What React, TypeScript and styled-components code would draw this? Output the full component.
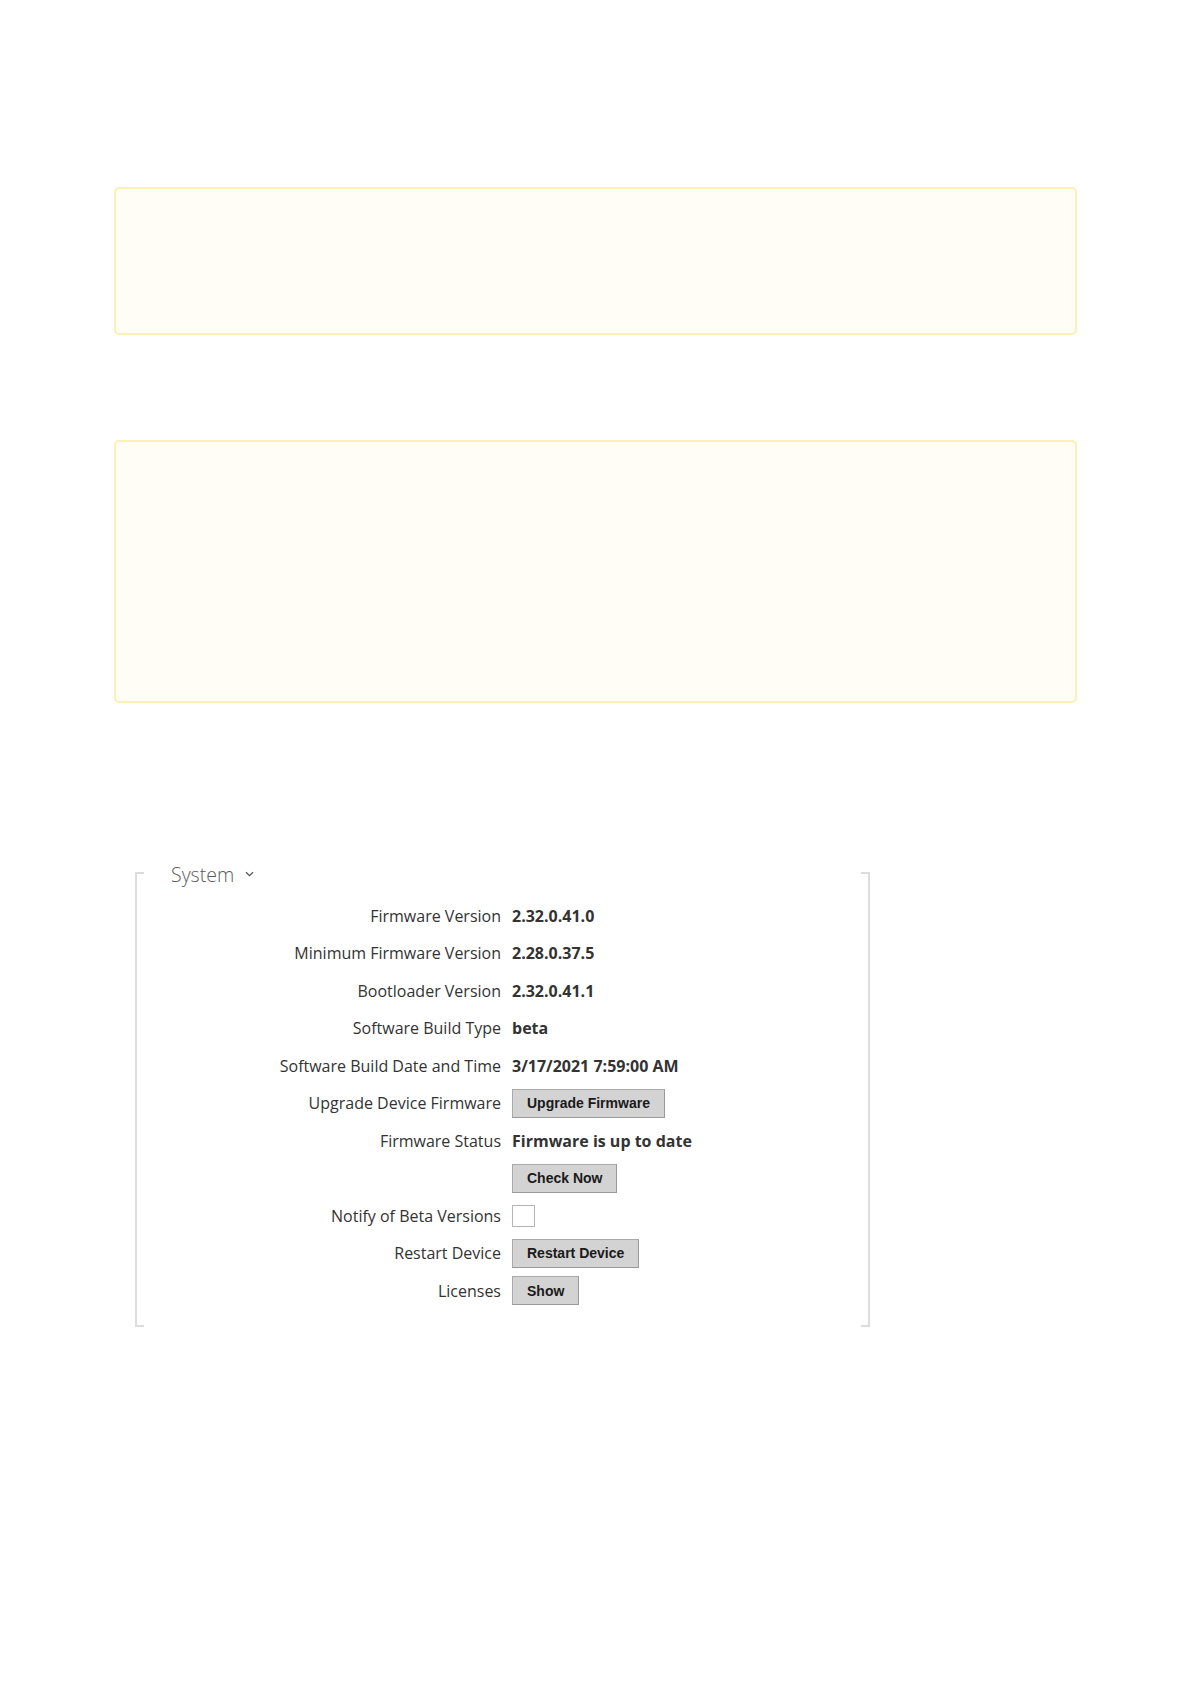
import styled, { createGlobalStyle } from 'styled-components';

const GlobalStyle = createGlobalStyle`
  html, body {
    margin: 0;
    padding: 0;
    background: #ffffff;
  }
  body {
    font-family: "Segoe UI", "Open Sans", "Noto Sans", sans-serif;
    color: #333333;
  }
`;

const Page = styled.div`
  width: 963px;
  padding: 187px 0 0 114px;
  display: flex;
  flex-direction: column;
`;

const NoteBox = styled.div<{ $height: number }>`
  box-sizing: border-box;
  height: ${({ $height }) => $height}px;
  background: #fffdf6;
  border: 2px solid #fcefb8;
  border-radius: 5px;
  & + & {
    margin-top: 105px;
  }
`;

const Section = styled.section`
  position: relative;
  box-sizing: border-box;
  width: 735px;
  margin: 162px 0 0 21px;
  padding: 0 0 17px 0;

  &::before,
  &::after {
    content: '';
    position: absolute;
    top: 7px;
    bottom: 0;
    width: 7px;
    border: 2px solid #dcdcdc;
  }
  &::before {
    left: 0;
    border-right: none;
  }
  &::after {
    right: 0;
    border-left: none;
  }
`;

const Heading = styled.h2`
  margin: -3px 0 11px 0;
  padding-left: 36px;
  display: flex;
  align-items: center;
  gap: 11px;
  height: 24px;
  font-size: 19.5px;
  font-weight: 300;
  color: #5a5a5a;
`;

const Chevron = () => (
  <svg width="9" height="6" viewBox="0 0 9 6" fill="none">
    <path d="M1 1.2 L4.5 4.6 L8 1.2" stroke="#555" strokeWidth="1.3" />
  </svg>
);

const Grid = styled.div`
  display: grid;
  grid-template-columns: 366px 1fr;
  grid-auto-rows: 37.5px;
  column-gap: 11px;
  align-items: center;
`;

const Label = styled.div`
  text-align: right;
  font-size: 16px;
  color: #333;
  white-space: nowrap;
`;

const Value = styled.div`
  font-size: 16px;
  font-weight: 700;
  color: #333;
  white-space: nowrap;
`;

const Button = styled.button`
  justify-self: start;
  box-sizing: border-box;
  height: 29px;
  padding: 0 14px;
  background: #d3d3d3;
  border: 1px solid #a9a9a9;
  border-right-color: #9a9a9a;
  border-bottom-color: #9a9a9a;
  font-family: "Liberation Sans", Arial, sans-serif;
  font-size: 14px;
  font-weight: 700;
  color: #1a1a1a;
`;

const CheckBox = styled.span`
  justify-self: start;
  box-sizing: border-box;
  width: 23px;
  height: 22px;
  border: 1px solid #b5b5b5;
  background: #fff;
`;

type Row =
  | { label: string; value: string }
  | { label: string; button: string }
  | { label: string; checkbox: true };

const rows: Row[] = [
  { label: 'Firmware Version', value: '2.32.0.41.0' },
  { label: 'Minimum Firmware Version', value: '2.28.0.37.5' },
  { label: 'Bootloader Version', value: '2.32.0.41.1' },
  { label: 'Software Build Type', value: 'beta' },
  { label: 'Software Build Date and Time', value: '3/17/2021 7:59:00 AM' },
  { label: 'Upgrade Device Firmware', button: 'Upgrade Firmware' },
  { label: 'Firmware Status', value: 'Firmware is up to date' },
  { label: '', button: 'Check Now' },
  { label: 'Notify of Beta Versions', checkbox: true },
  { label: 'Restart Device', button: 'Restart Device' },
  { label: 'Licenses', button: 'Show' },
];

function App() {
  return (
    <>
      <GlobalStyle />
      <Page>
        <NoteBox $height={148} />
        <NoteBox $height={263} />
        <Section>
          <Heading>
            System <Chevron />
          </Heading>
          <Grid>
            {rows.map((row, i) => (
              <>
                <Label key={`l${i}`}>{row.label}</Label>
                {'value' in row && <Value key={`v${i}`}>{row.value}</Value>}
                {'button' in row && <Button key={`b${i}`}>{row.button}</Button>}
                {'checkbox' in row && <CheckBox key={`c${i}`} />}
              </>
            ))}
          </Grid>
        </Section>
      </Page>
    </>
  );
}

export default App;
